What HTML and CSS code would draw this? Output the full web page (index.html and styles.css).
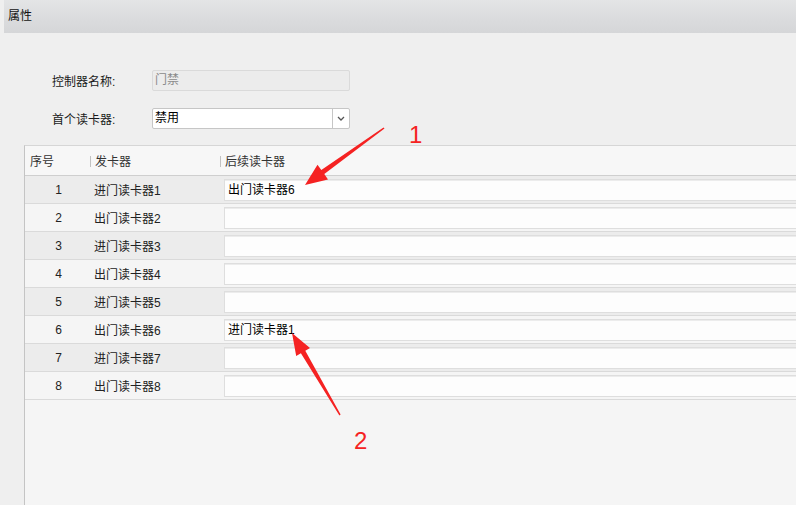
FILE: index.html
```html
<!DOCTYPE html>
<html>
<head>
<title>属性</title>
<meta charset="utf-8"/>
<link rel="stylesheet" href="styles.css">
</head>
<body>

<div class="titlebar">属性</div>

<div class="form">
  <div class="form-row">
    <label>控制器名称:</label>
    <div class="field disabled">门禁</div>
  </div>
  <div class="form-row">
    <label>首个读卡器:</label>
    <div class="field select">
      <span class="value">禁用</span>
      <span class="drop"><svg width="8" height="5" viewBox="0 0 8 5"><path d="M1 1l3 3 3-3" fill="none" stroke="#555" stroke-width="1.3"/></svg></span>
    </div>
  </div>
</div>

<div class="panel">
  <div class="grid head">
    <div class="c1">序号</div>
    <div class="c2"><i class="sep"></i>发卡器</div>
    <div class="c3"><i class="sep"></i>后续读卡器</div>
  </div>
  <div class="grid row odd"><div class="c1 num">1</div><div class="c2">进门读卡器1</div><div class="c3"><div class="cell">出门读卡器6</div></div></div>
  <div class="grid row"><div class="c1 num">2</div><div class="c2">出门读卡器2</div><div class="c3"><div class="cell"></div></div></div>
  <div class="grid row odd"><div class="c1 num">3</div><div class="c2">进门读卡器3</div><div class="c3"><div class="cell"></div></div></div>
  <div class="grid row"><div class="c1 num">4</div><div class="c2">出门读卡器4</div><div class="c3"><div class="cell"></div></div></div>
  <div class="grid row odd"><div class="c1 num">5</div><div class="c2">进门读卡器5</div><div class="c3"><div class="cell"></div></div></div>
  <div class="grid row"><div class="c1 num">6</div><div class="c2">出门读卡器6</div><div class="c3"><div class="cell">进门读卡器1</div></div></div>
  <div class="grid row odd"><div class="c1 num">7</div><div class="c2">进门读卡器7</div><div class="c3"><div class="cell"></div></div></div>
  <div class="grid row"><div class="c1 num">8</div><div class="c2">出门读卡器8</div><div class="c3"><div class="cell"></div></div></div>
</div>

<!-- red annotation marks drawn over the screenshot -->
<svg class="notes" width="796" height="505" viewBox="0 0 796 505">
  <polygon fill="#f52222" points="305,185 328,179.4 324.3,174.1 384.5,128.6 383.5,127.4 321.3,170.1 317.5,164.8"/>
  <polygon fill="#f52222" points="292,333 310,348 305.3,350.7 340.6,414.6 339.4,415.4 300.9,353.3 296.2,356"/>
  <text x="409" y="143" class="mark">1</text>
  <text x="354" y="449" class="mark">2</text>
</svg>

</body>
</html>
```

FILE: styles.css
```css
body {
    margin: 0;
    height: 505px;
    overflow: hidden;
    position: relative;
    background: #efefef;
    font-family: "Liberation Sans", "Noto Sans CJK SC", sans-serif;
    font-size: 12px;
    color: #1a1a1a;
}

.titlebar {
    margin-left: 4px;
    height: 33px;
    line-height: 33px;
    padding-left: 4px;
    background: linear-gradient(#e4e5e6, #dcdddf 45%, #d5d6d8);
    color: #111;
}

.form { padding: 37px 0 0 52px; }
.form-row { display: flex; align-items: center; height: 21px; margin-bottom: 17px; }
.form-row:last-child { margin-bottom: 16px; }
.form-row label { width: 100px; }
.field {
    box-sizing: border-box;
    width: 198px;
    height: 21px;
    border: 1px solid #cfcfcf;
    border-radius: 2px;
    padding-left: 2px;
    line-height: 19px;
    background: #fff;
}
.field.disabled { background: #ececec; border-color: #dadada; color: #8a8a8a; }
.field.select { display: flex; padding: 0; border-color: #c6c6c6; }
.field.select .value { flex: 1; padding-left: 2px; color: #000; }
.field.select .drop {
    width: 16px;
    border-left: 1px solid #c6c6c6;
    display: flex;
    align-items: center;
    justify-content: center;
}

.panel {
    box-sizing: border-box;
    margin-left: 24px;
    height: 360px;
    border-top: 1px solid #d6d6d6;
    border-left: 1px solid #c4c4c4;
    background: #f5f5f5;
}
.grid { display: grid; grid-template-columns: 65px 130px 1fr; border-bottom: 1px solid #dadada; }
.grid > div { display: flex; align-items: center; white-space: nowrap; }
.head { height: 29px; background: #f7f7f7; color: #333; border-bottom-color: #cfcfcf; }
.head .c1 { padding-left: 5px; }
.sep { display: inline-block; width: 1px; height: 11px; background: #c2c2c2; margin: 2px 4px 0 0; }
.row { height: 27px; background: #f5f5f5; color: #222; }
.row.odd { background: #ececec; }
.row .num { justify-content: center; padding-left: 2px; }
.row .c2 { padding-left: 4px; }
.row .c3 { padding-left: 4px; }
.cell {
    box-sizing: border-box;
    width: 100%;
    height: 22px;
    line-height: 20px;
    padding-left: 3px;
    background: #fdfdfd;
    border: 1px solid #dedede;
    border-right: none;
    box-shadow: inset 0 1px 0 #ececec;
    color: #000;
}

.notes { position: absolute; left: 0; top: 0; }
.mark { fill: #f52222; font-family: "Liberation Sans", sans-serif; font-size: 24px; }
```
